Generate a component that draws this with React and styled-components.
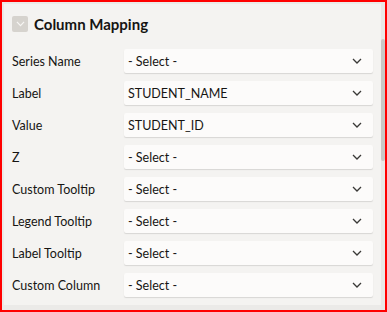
import React from 'react';
import styled, { createGlobalStyle } from 'styled-components';

const Global = createGlobalStyle`
  body {
    margin: 0;
    font-family: Lato, "Open Sans", sans-serif;
    color: #161513;
  }
`;

const Frame = styled.div`
  width: 387px;
  height: 312px;
  box-sizing: border-box;
  border: 2px solid #ff0000;
  background: #ebeae8;
  display: flex;
  overflow: hidden;
`;

const Panel = styled.section`
  flex: 1;
  margin: 2px 0 5px 2px;
  padding: 12px 8px 0 8px;
  background: #f4f3f1;
`;

const Header = styled.div`
  display: flex;
  align-items: center;
  gap: 6px;
  height: 16px;
`;

const Toggle = styled.span`
  width: 16px;
  height: 16px;
  border-radius: 2px;
  background: #d6d3ce;
  display: flex;
  align-items: center;
  justify-content: center;
`;

const Title = styled.h2`
  margin: 0;
  font-size: 15px;
  font-weight: 700;
  line-height: 16px;
`;

const Fields = styled.div`
  margin-top: 17px;
  display: grid;
  grid-template-columns: 112px 1fr;
  grid-auto-rows: 24px;
  row-gap: 8px;
`;

const Label = styled.label`
  font-size: 12.5px;
  display: flex;
  align-items: center;
`;

const Select = styled.div`
  height: 24px;
  box-sizing: border-box;
  background: #fcfbfa;
  border-radius: 2px;
  box-shadow: 0 1px 1px rgba(0, 0, 0, 0.12);
  display: flex;
  align-items: center;
  justify-content: space-between;
  padding: 0 11px 0 4px;
  font-size: 12.5px;
`;

const Track = styled.div`
  width: 4px;
  background: #e9e8e6;
`;

const Thumb = styled.div`
  margin-top: 37px;
  height: 122px;
  border-radius: 2px;
  background: #c9c8c6;
`;

const Chevron = ({ color = '#3a3937', size = 10 }) => (
  <svg width={size} height={size / 2 + 1} viewBox="0 0 10 6" fill="none">
    <path d="M1 1l4 4 4-4" stroke={color} strokeWidth="1.3" />
  </svg>
);

const fields = [
  ['Series Name', '- Select -'],
  ['Label', 'STUDENT_NAME'],
  ['Value', 'STUDENT_ID'],
  ['Z', '- Select -'],
  ['Custom Tooltip', '- Select -'],
  ['Legend Tooltip', '- Select -'],
  ['Label Tooltip', '- Select -'],
  ['Custom Column', '- Select -'],
];

export default function App() {
  return (
    <>
      <Global />
      <Frame>
        <Panel>
          <Header>
            <Toggle>
              <Chevron color="#f7f6f4" size={9} />
            </Toggle>
            <Title>Column Mapping</Title>
          </Header>
          <Fields>
            {fields.map(([label, value]) => (
              <React.Fragment key={label}>
                <Label>{label}</Label>
                <Select>
                  <span>{value}</span>
                  <Chevron />
                </Select>
              </React.Fragment>
            ))}
          </Fields>
        </Panel>
        <Track>
          <Thumb />
        </Track>
      </Frame>
    </>
  );
}
